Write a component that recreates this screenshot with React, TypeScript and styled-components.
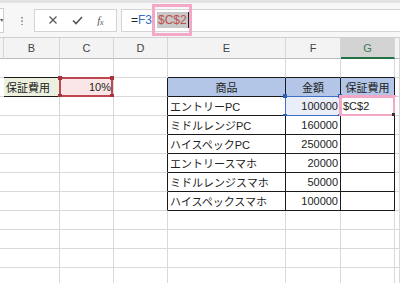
import React from "react";
import styled, { createGlobalStyle } from "styled-components";

const GlobalStyle = createGlobalStyle`
  html, body { margin: 0; padding: 0; background: #fff; }
  body {
    width: 400px;
    height: 283px;
    overflow: hidden;
    font-family: "Liberation Sans", "Noto Sans CJK JP", sans-serif;
  }
`;

const COLS = "4px 56px 54px 54px 118px 55px 54px 1fr";
const GRID = "#d9d9d9";
const DARK = "#1a1a1a";

/* ---------- formula bar ---------- */

const FormulaBar = styled.div`
  height: 38px;
  box-sizing: border-box;
  background: #f7f7f7;
  border-top: 3px solid #e3e3e3;
  border-bottom: 1px solid #cfcfcf;
  display: flex;
  align-items: center;
`;

const NameBox = styled.div`
  width: 3px;
  height: 23px;
  background: #fff;
  border: 1px solid #d0d0d0;
  border-left: none;
  position: relative;
  &::after {
    content: "";
    position: absolute;
    left: 0;
    top: 10px;
    border-left: 2px solid transparent;
    border-right: 1px solid transparent;
    border-top: 3px solid #555;
  }
`;

const Dots = styled.div`
  margin-left: 17px;
  width: 2px;
  height: 9px;
  background: radial-gradient(circle, #a0a0a0 0.8px, transparent 1px) 0 0 / 2px 3.5px repeat-y;
`;

const FuncBox = styled.div`
  margin-left: 11px;
  width: 83px;
  height: 23px;
  box-sizing: border-box;
  background: #fff;
  border: 1px solid #d4d4d4;
  display: flex;
  align-items: center;
  justify-content: space-around;
  padding: 0 6px;
`;

const Fx = styled.span`
  font-family: "Liberation Serif", serif;
  font-style: italic;
  font-size: 11px;
  color: #555;
  letter-spacing: -0.5px;
  sub {
    font-size: 8px;
    vertical-align: -1px;
  }
`;

const InputBox = styled.div`
  margin-left: 4px;
  flex: 1;
  height: 23px;
  box-sizing: border-box;
  background: #fff;
  border: 1px solid #d4d4d4;
  border-right: none;
  display: flex;
  align-items: center;
  padding-left: 9px;
  font-size: 12px;
  position: relative;
`;

const Token = styled.span<{ $color: string }>`
  color: ${(p) => p.$color};
`;

const Tick = styled.span`
  display: inline-block;
  width: 1px;
  height: 3px;
  margin: 0 2px 0 2px;
  align-self: flex-start;
  margin-top: 6px;
  background: #9a9a9a;
`;

const Selected = styled.span`
  background: #c8c8c8;
  color: #c0504d;
  padding: 0 1px;
  line-height: 16px;
  border-right: 1px solid #222;
`;

const PinkMark = styled.div`
  position: absolute;
  left: 30px;
  top: -6px;
  width: 40px;
  height: 32px;
  box-sizing: border-box;
  border: 3px solid #f3a8c7;
  pointer-events: none;
`;

/* ---------- sheet ---------- */

const HeaderRow = styled.div`
  display: grid;
  grid-template-columns: ${COLS};
  height: 21px;
`;

const ColHead = styled.div<{ $active?: boolean }>`
  box-sizing: border-box;
  border-right: 1px solid #d6d6d6;
  border-bottom: ${(p) => (p.$active ? "2px solid #217346" : "1px solid #bdbdbd")};
  background: ${(p) => (p.$active ? "#d3d3d3" : "#f3f3f3")};
  color: ${(p) => (p.$active ? "#3f7a55" : "#444")};
  font-size: 11px;
  display: flex;
  align-items: center;
  justify-content: center;
  padding-top: ${(p) => (p.$active ? "1px" : "0")};
`;

const Grid = styled.div`
  display: grid;
  grid-template-columns: ${COLS};
  grid-auto-rows: 19px;
`;

type Align = "left" | "right" | "center";

const Cell = styled.div<{ $bg?: string; $right?: string; $bottom?: string; $align?: Align }>`
  position: relative;
  box-sizing: border-box;
  border-right: 1px solid ${(p) => p.$right ?? GRID};
  border-bottom: 1px solid ${(p) => p.$bottom ?? GRID};
  background: ${(p) => p.$bg ?? "#fff"};
  display: flex;
  align-items: center;
  justify-content: ${(p) =>
    p.$align === "right" ? "flex-end" : p.$align === "center" ? "center" : "flex-start"};
  padding: 0 2px;
  font-size: 11px;
  color: #222;
  white-space: nowrap;
`;

const RefFrame = styled.div<{ $color: string; $width?: number }>`
  position: absolute;
  left: -1px;
  top: -1px;
  right: 0;
  bottom: -1px;
  border: ${(p) => p.$width ?? 1}px solid ${(p) => p.$color};
  pointer-events: none;
`;

const Handle = styled.span<{ $color: string; $x: "l" | "r"; $y: "t" | "b" }>`
  position: absolute;
  width: 4px;
  height: 4px;
  background: ${(p) => p.$color};
  ${(p) => (p.$x === "l" ? "left: -3px;" : "right: -3px;")}
  ${(p) => (p.$y === "t" ? "top: -3px;" : "bottom: -3px;")}
`;

const Annotation = styled.div`
  position: absolute;
  left: -2px;
  top: -2px;
  right: -2px;
  bottom: -2px;
  border: 3px solid #f3a8c7;
  pointer-events: none;
`;

const FillHandle = styled.span`
  position: absolute;
  right: -1px;
  bottom: -1px;
  width: 3px;
  height: 3px;
  background: #333;
`;

const Ref: React.FC<{ color: string; frame: string; width?: number }> = ({ color, frame, width }) => (
  <RefFrame $color={frame} $width={width}>
    <Handle $color={color} $x="l" $y="t" />
    <Handle $color={color} $x="r" $y="t" />
    <Handle $color={color} $x="l" $y="b" />
    <Handle $color={color} $x="r" $y="b" />
  </RefFrame>
);

const items: [string, string][] = [
  ["エントリーPC", "100000"],
  ["ミドルレンジPC", "160000"],
  ["ハイスペックPC", "250000"],
  ["エントリースマホ", "20000"],
  ["ミドルレンジスマホ", "50000"],
  ["ハイスペックスマホ", "100000"],
];

const letters = ["", "B", "C", "D", "E", "F", "G", ""];

const App: React.FC = () => {
  const rows: React.ReactNode[] = [];
  for (let r = 1; r <= 12; r++) {
    const inTable = r >= 2 && r <= 8;
    const item = r >= 3 && r <= 8 ? items[r - 3] : null;
    const tableBottom = r === 1 || inTable ? DARK : undefined;
    const tableRight = inTable ? DARK : undefined;

    rows.push(
      <Cell key={`a${r}`} $right={r === 2 ? DARK : undefined} />,
      r === 2 ? (
        <Cell key={`b${r}`} $bg="#ebf1de" $right={DARK} $bottom={DARK}>
          保証費用
        </Cell>
      ) : (
        <Cell key={`b${r}`} $bottom={r === 1 ? DARK : undefined} />
      ),
      r === 2 ? (
        <Cell key={`c${r}`} $bg="#fbe6e7" $align="right">
          10%
          <Ref color="#a8323e" frame="#bd4852" width={2} />
        </Cell>
      ) : (
        <Cell key={`c${r}`} />
      ),
      <Cell key={`d${r}`} $right={tableRight} />,
      <Cell
        key={`e${r}`}
        $right={tableRight}
        $bottom={tableBottom}
        $bg={r === 2 ? "#b4c6e7" : undefined}
        $align={r === 2 ? "center" : "left"}
      >
        {r === 2 ? "商品" : item?.[0]}
      </Cell>,
      <Cell
        key={`f${r}`}
        $right={tableRight}
        $bottom={tableBottom}
        $bg={r === 2 ? "#b4c6e7" : r === 3 ? "#e9eef8" : undefined}
        $align={r === 2 ? "center" : "right"}
      >
        {r === 2 ? "金額" : item?.[1]}
        {r === 3 && <Ref color="#2f5fb3" frame="#3f6fc4" />}
      </Cell>,
      <Cell
        key={`g${r}`}
        $right={tableRight}
        $bottom={tableBottom}
        $bg={r === 2 ? "#b4c6e7" : undefined}
        $align={r === 2 ? "center" : "left"}
      >
        {r === 2 ? "保証費用" : r === 3 ? "$C$2" : null}
        {r === 3 && (
          <>
            <Annotation />
            <FillHandle />
          </>
        )}
      </Cell>,
      <Cell key={`h${r}`} />
    );
  }

  return (
    <>
      <GlobalStyle />
      <FormulaBar>
        <NameBox />
        <Dots />
        <FuncBox>
          <svg width="10" height="10" viewBox="0 0 10 10">
            <path d="M1.5 1.5 L8.5 8.5 M8.5 1.5 L1.5 8.5" stroke="#555" strokeWidth="1.2" />
          </svg>
          <svg width="11" height="9" viewBox="0 0 11 9">
            <path d="M1 4.5 L4 7.5 L10 1" stroke="#555" strokeWidth="1.6" fill="none" />
          </svg>
          <Fx>
            f<sub>x</sub>
          </Fx>
        </FuncBox>
        <InputBox>
          <Token $color="#222">=</Token>
          <Token $color="#3a6cc2">F3</Token>
          <Tick />
          <Selected>$C$2</Selected>
          <PinkMark />
        </InputBox>
      </FormulaBar>
      <HeaderRow>
        {letters.map((l, i) => (
          <ColHead key={i} $active={l === "G"}>
            {l}
          </ColHead>
        ))}
      </HeaderRow>
      <Grid>{rows}</Grid>
    </>
  );
};

export default App;
